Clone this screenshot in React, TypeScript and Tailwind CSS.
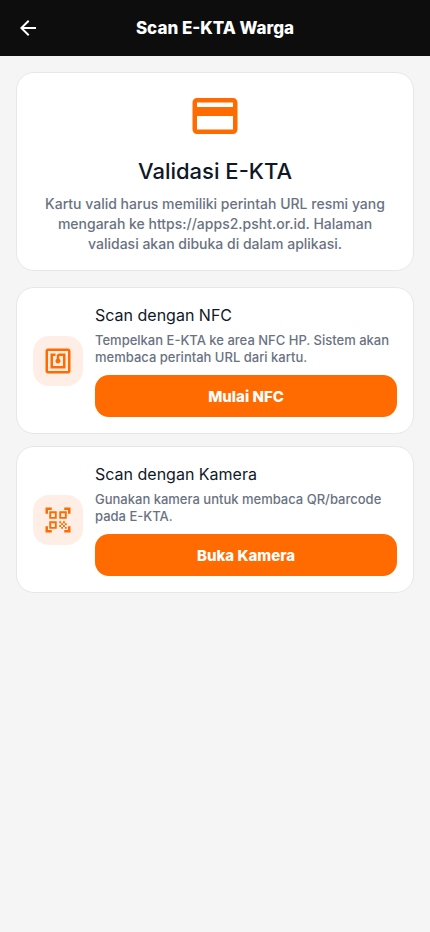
import type {ReactNode} from "react";
import {MdArrowBack, MdCreditCard, MdNfc, MdQrCodeScanner} from "react-icons/md";

type ScanCardProps = {
  icon: ReactNode;
  title: string;
  description: string;
  action: string;
};

function ScanCard({icon, title, description, action}: ScanCardProps) {
  return (
    <section className="flex items-center gap-3 rounded-[18px] border border-gray-200 bg-white p-4">
      <div className="flex size-[50px] shrink-0 items-center justify-center rounded-2xl bg-[#ffeee6] text-[#ff6b00]">
        {icon}
      </div>
      <div className="min-w-0 flex-1">
        <h2 className="text-base leading-[23px] text-gray-900">{title}</h2>
        <p className="mt-[5px] text-[13px] leading-[17px] font-medium text-gray-500">{description}</p>
        <button
          type="button"
          className="mt-[9px] h-[42px] w-full rounded-[14px] bg-[#ff6b00] pt-[2px] text-[15px] font-extrabold text-white"
        >
          {action}
        </button>
      </div>
    </section>
  );
}

export default function App() {
  return (
    <div className="min-h-screen bg-[#f5f5f5] font-['Inter',sans-serif]">
      <header className="grid h-14 grid-cols-[56px_1fr_56px] items-center bg-[#0d0d0d] text-white">
        <button type="button" aria-label="Kembali" className="flex h-14 items-center justify-center">
          <MdArrowBack size={24} />
        </button>
        <h1 className="text-center text-[17px] leading-6 font-extrabold">Scan E-KTA Warga</h1>
      </header>

      <main className="p-4">
        <section className="flex flex-col items-center rounded-[18px] border border-gray-200 bg-white p-4 text-center">
          <MdCreditCard size={54} className="text-[#ff6b00]" />
          <h2 className="mt-3 text-[22px] leading-[33px] font-medium text-gray-900">Validasi E-KTA</h2>
          <p className="mt-[6px] px-3 text-sm leading-5 font-medium text-gray-500">
            Kartu valid harus memiliki perintah URL resmi yang mengarah ke https://apps2.psht.or.id. Halaman validasi
            akan dibuka di dalam aplikasi.
          </p>
        </section>

        <div className="mt-4 flex flex-col gap-3">
          <ScanCard
            icon={<MdNfc size={30} />}
            title="Scan dengan NFC"
            description="Tempelkan E-KTA ke area NFC HP. Sistem akan membaca perintah URL dari kartu."
            action="Mulai NFC"
          />
          <ScanCard
            icon={<MdQrCodeScanner size={30} />}
            title="Scan dengan Kamera"
            description="Gunakan kamera untuk membaca QR/barcode pada E-KTA."
            action="Buka Kamera"
          />
        </div>
      </main>
    </div>
  );
}
